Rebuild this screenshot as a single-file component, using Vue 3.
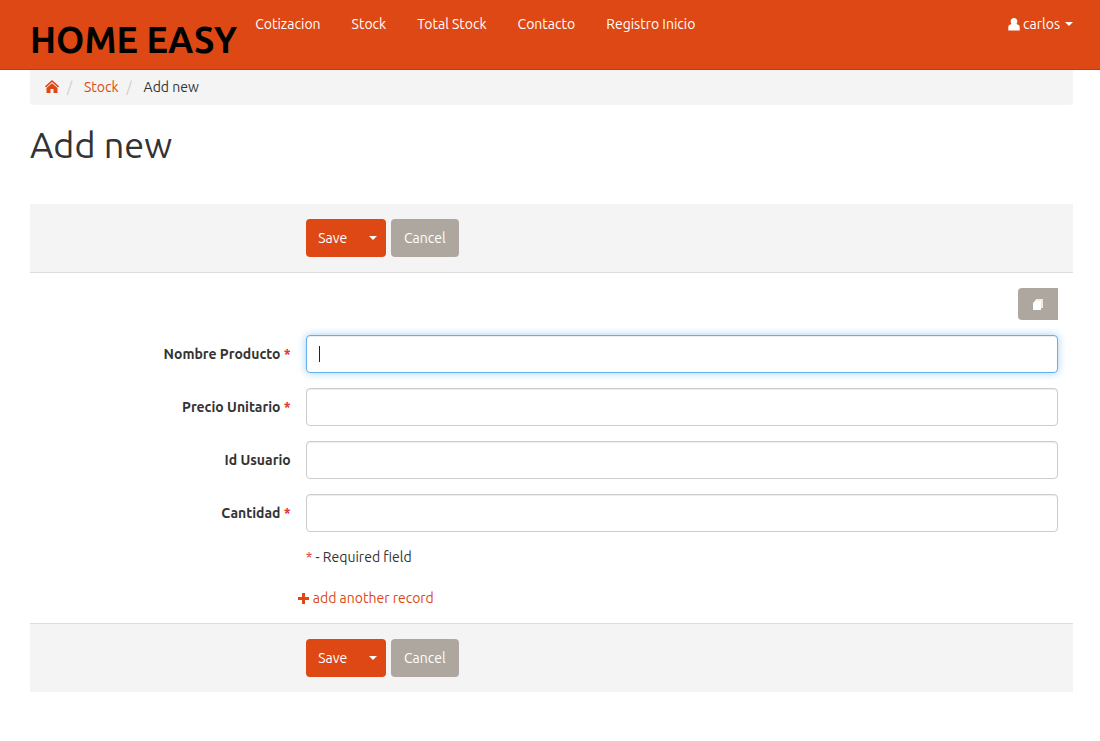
<script setup>
import { onMounted, ref } from 'vue'

const links = ['Cotizacion', 'Stock', 'Total Stock', 'Contacto', 'Registro Inicio']
const fields = [
  { id: 'nombre', label: 'Nombre Producto', required: true },
  { id: 'precio', label: 'Precio Unitario', required: true },
  { id: 'usuario', label: 'Id Usuario', required: false },
  { id: 'cantidad', label: 'Cantidad', required: true }
]
const values = ref(fields.map(() => ''))
const inputs = ref([])
onMounted(() => inputs.value[0].focus())
</script>

<template>
  <header class="navbar">
    <a class="brand" href="#">HOME EASY</a>
    <nav class="links">
      <a v-for="l in links" :key="l" href="#">{{ l }}</a>
    </nav>
    <button type="button" class="user">
      <svg class="user-icon" viewBox="0 0 12 13" aria-hidden="true">
        <path d="M6 0C8 0 9.300 1.300 9.300 3.200C9.300 4.300 9 5.200 8.500 5.900L10.700 7Q11.700 7.600 11.700 9V12.500H0.300V9Q0.300 7.600 1.300 7L3.500 5.900C3 5.200 2.700 4.300 2.700 3.200C2.700 1.300 4 0 6 0Z" />
      </svg>
      <span>carlos</span>
      <i class="caret"></i>
    </button>
  </header>

  <main class="page">
    <nav class="breadcrumb" aria-label="Breadcrumb">
      <a class="home" href="#" aria-label="Home">
        <svg viewBox="0 0 14 13" aria-hidden="true">
          <path d="M7 0L14 6.300L13 7.400L7 2L1 7.400L0 6.300Z" />
          <path d="M7 3.200L12.500 8V13H8.500V9H5.500V13H1.500V8Z" />
        </svg>
      </a>
      <span class="slash">/</span>
      <a href="#">Stock</a>
      <span class="slash">/</span>
      <span>Add new</span>
    </nav>

    <h1>Add new</h1>

    <form @submit.prevent>
      <div class="actions top">
        <div class="split">
          <button type="submit" class="btn save">Save</button>
          <button type="button" class="btn toggle" aria-label="More save options"><i class="caret"></i></button>
        </div>
        <button type="button" class="btn cancel">Cancel</button>
      </div>

      <div class="body">
        <div class="tools">
          <button type="button" class="copy" aria-label="Copy">
            <svg viewBox="0 0 10 11" aria-hidden="true">
              <path class="back" d="M3 0H10V9H8V2H2Z" />
              <path d="M2.500 1.500H8V11H0V4Z" />
            </svg>
          </button>
        </div>

        <div v-for="(f, i) in fields" :key="f.id" class="row">
          <label :for="f.id">{{ f.label }}<span v-if="f.required" class="star"> *</span></label>
          <div class="control">
            <input
              :id="f.id"
              ref="inputs"
              v-model="values[i]"
              type="text"
              :class="{ active: i === 0 }"
              :required="f.required"
            />
            <span v-if="i === 0 && !values[i]" class="cursor"></span>
          </div>
        </div>

        <p class="note"><span class="star">*</span> - Required field</p>
        <a class="add" href="#">
          <svg viewBox="0 0 11 11" aria-hidden="true"><path d="M4 0H7V4H11V7H7V11H4V7H0V4H4Z" /></svg>
          <span>add another record</span>
        </a>
      </div>

      <div class="actions bottom">
        <div class="split">
          <button type="submit" class="btn save">Save</button>
          <button type="button" class="btn toggle" aria-label="More save options"><i class="caret"></i></button>
        </div>
        <button type="button" class="btn cancel">Cancel</button>
      </div>
    </form>
  </main>
</template>

<style>
body {
  margin: 0;
  background: #fff;
  color: #333;
  font: 14px/20px Ubuntu, "Noto Sans", "Open Sans", sans-serif;
}
</style>

<style scoped>
* { box-sizing: border-box; }
a { color: #dd4814; text-decoration: none; }
button, input { font: inherit; margin: 0; }
button { border: 0; cursor: pointer; }
svg { display: block; fill: currentColor; }

.navbar {
  display: flex;
  align-items: flex-start;
  min-height: 70px;
  padding: 0 27px 0 30px;
  background: #dd4814;
  border-bottom: 1px solid #bf3e11;
}
.brand {
  padding-top: 20px;
  color: #000;
  font-size: 36px;
  line-height: 40px;
  font-weight: 700;
  white-space: nowrap;
}
.links {
  display: flex;
  flex: 1;
  gap: 31px;
  padding: 14px 18px;
}
.links a { color: #fff; white-space: nowrap; }
.user {
  display: flex;
  align-items: center;
  padding: 14px 0;
  background: none;
  color: #fff;
}
.user-icon { width: 12px; height: 13px; margin-right: 3px; }
.caret {
  border-top: 4px solid;
  border-left: 4px solid transparent;
  border-right: 4px solid transparent;
}
.user .caret { margin-left: 5px; }

.page { padding: 0 27px 49px 30px; }
.breadcrumb {
  display: flex;
  align-items: center;
  height: 35px;
  padding: 0 15px 2px;
  background: #f4f4f4;
  border-radius: 0 0 4px 4px;
}
.home svg { width: 14px; height: 13px; }
.slash { width: 25px; padding-left: 8px; color: #ccc; }
h1 {
  margin: 20px 0 39px;
  font-size: 36px;
  line-height: 40px;
  font-weight: 400;
}

.actions {
  display: flex;
  gap: 5px;
  padding: 15px 15px 15px calc(25% + 15px);
  background: #f4f4f4;
}
.top { border-bottom: 1px solid #ddd; }
.bottom { border-top: 1px solid #ddd; }
.split { display: flex; border-radius: 4px; overflow: hidden; }
.btn { height: 38px; color: #fff; }
.save { width: 54px; padding: 0; background: #dd4814; }
.toggle {
  display: flex;
  align-items: center;
  justify-content: center;
  width: 26px;
  padding: 0;
  background: #dd4814;
}
.cancel { width: 68px; padding: 0; border-radius: 4px; background: #aea79f; }

.body { padding: 15px 0; }
.tools { display: flex; justify-content: flex-end; padding: 0 15px 15px; }
.copy {
  display: flex;
  align-items: center;
  justify-content: center;
  width: 40px;
  height: 32px;
  padding: 0;
  border-radius: 4px 0 0 4px;
  background: #aea79f;
  color: #fff;
}
.copy svg { width: 10px; height: 11px; }
.back { fill: #f6e8da; }

.row { display: flex; align-items: center; margin-bottom: 15px; }
.row label {
  width: 25%;
  text-align: right;
  font-weight: 700;
}
label { white-space: pre; }
.star { color: #df382c; }
.row .control { position: relative; flex: 1; padding: 0 15px; }
.row input {
  display: block;
  width: 100%;
  height: 38px;
  padding: 8px 12px;
  border: 1px solid #ccc;
  border-radius: 4px;
  background: #fff;
  color: #333;
  outline: 0;
  box-shadow: inset 0 1px 1px rgba(0, 0, 0, 0.075);
}
.row input.active {
  border-color: #66afe9;
  box-shadow: inset 0 1px 1px rgba(0, 0, 0, 0.075), 0 0 8px rgba(102, 175, 233, 0.6);
}
.cursor {
  position: absolute;
  top: 11px;
  left: 28px;
  width: 1px;
  height: 16px;
  background: #222;
  pointer-events: none;
}
.note { margin: 0 0 21px; padding-left: calc(25% + 15px); }
.add {
  display: flex;
  align-items: center;
  gap: 4px;
  width: fit-content;
  margin-left: calc(25% + 7px);
}
.add svg { width: 11px; height: 11px; }
</style>
